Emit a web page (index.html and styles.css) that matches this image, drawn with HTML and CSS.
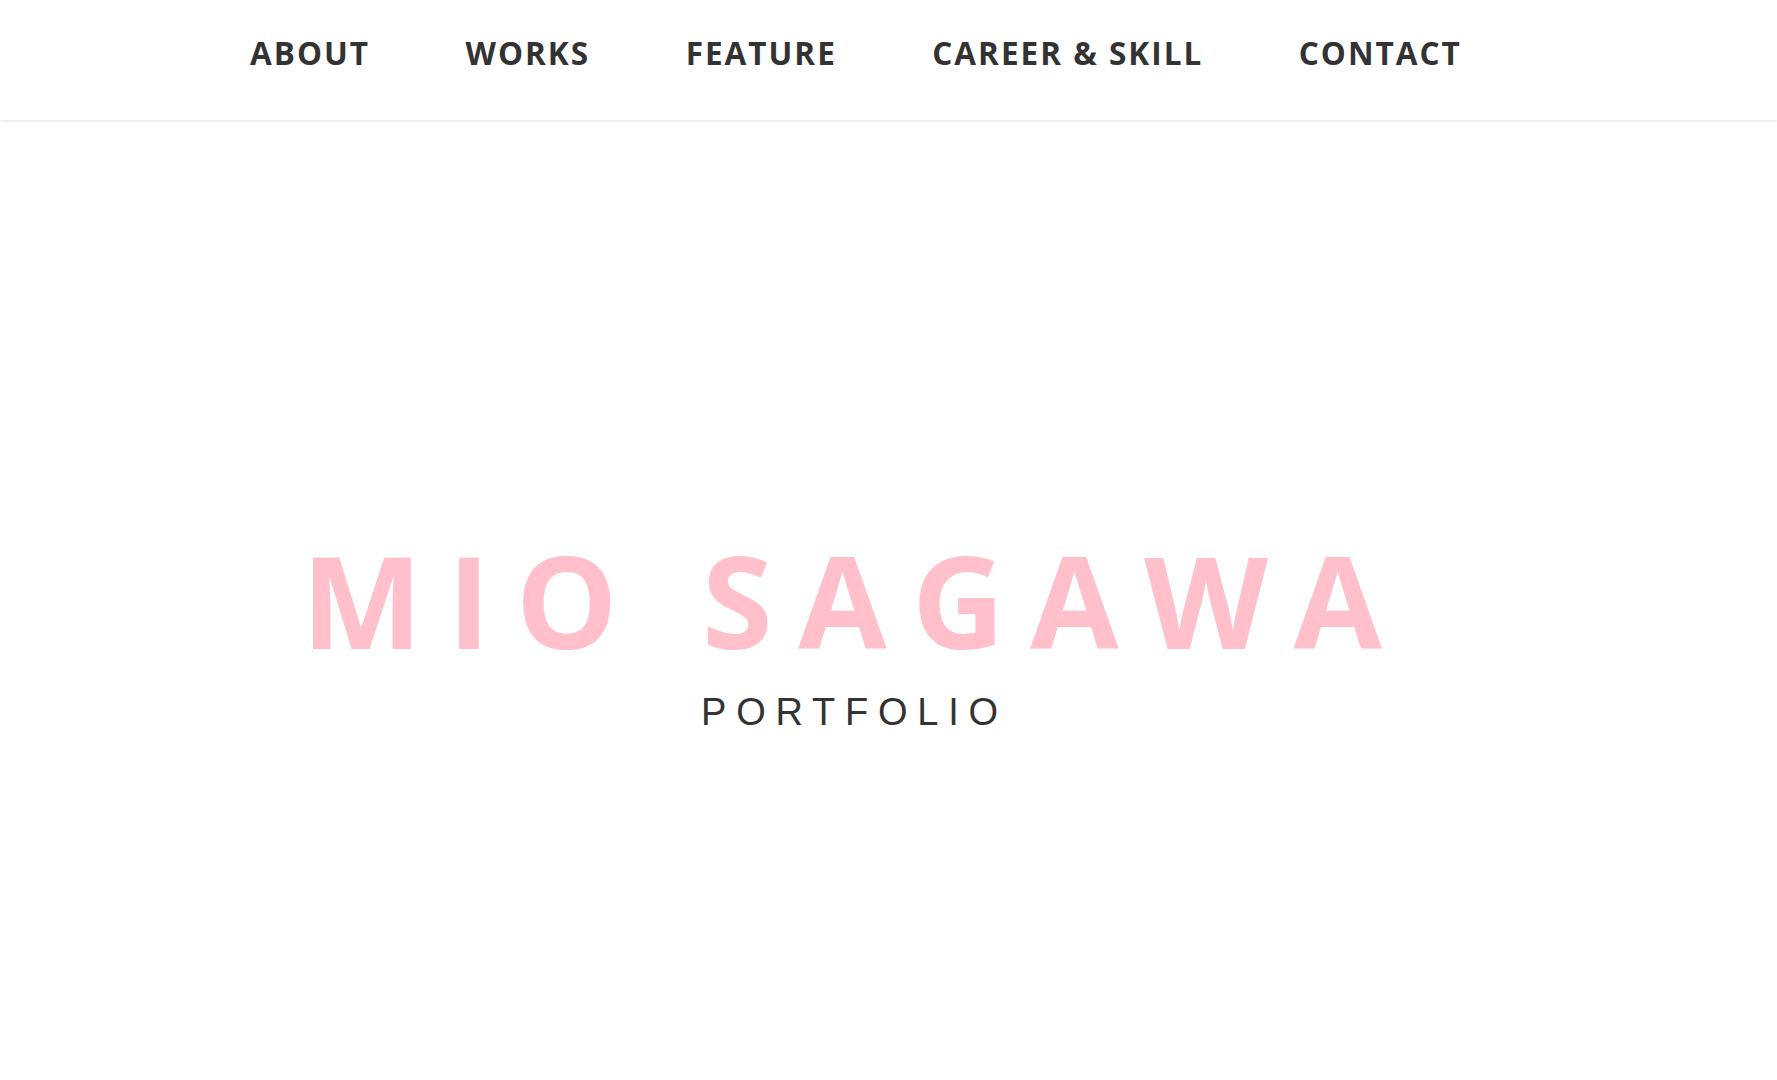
FILE: index.html
```html
<!DOCTYPE html>
<html lang="ja">
<head>
<meta charset="utf-8">
<title>MIO SAGAWA PORTFOLIO</title>
<link rel="stylesheet" href="styles.css">
</head>
<body>
<header class="site-header">
  <nav class="nav">
    <a class="nav-link" href="#about">ABOUT</a>
    <a class="nav-link" href="#works">WORKS</a>
    <a class="nav-link" href="#feature">FEATURE</a>
    <a class="nav-link" href="#career">CAREER &amp; SKILL</a>
    <a class="nav-link" href="#contact">CONTACT</a>
  </nav>
</header>
<main class="hero">
  <h1 class="hero-title">MIO SAGAWA</h1>
  <p class="hero-sub">PORTFOLIO</p>
</main>
</body>
</html>
```
FILE: styles.css
```css
html, body {
  margin: 0;
  padding: 0;
  background: #fff;
}
body {
  font-family: "Open Sans", "Liberation Sans", sans-serif;
  color: #333;
}
.site-header {
  height: 120px;
  background: #fff;
  box-shadow: 0 1px 3px rgba(0,0,0,0.12);
  display: flex;
  align-items: flex-start;
}
.nav {
  display: flex;
  padding-left: 250px;
  padding-top: 30px;
  gap: 95.5px;
}
.nav-link {
  font-family: "Open Sans", sans-serif;
  font-weight: 700;
  font-size: 31.5px;
  line-height: 46px;
  letter-spacing: 2px;
  color: #333;
  text-decoration: none;
}
.hero {
  height: 960px;
  display: flex;
  flex-direction: column;
  align-items: center;
  padding-right: 68px;
}
.hero-title {
  margin: 403px 0 0;
  font-family: "Open Sans", sans-serif;
  font-weight: 700;
  font-size: 128px;
  line-height: 1.2;
  letter-spacing: 0.2em;
  color: #ffc0cb;
}
.hero-sub {
  margin: 14px 0 0;
  font-family: "Liberation Sans", Arial, sans-serif;
  font-size: 38px;
  letter-spacing: 0.257em;
  color: #333;
}
```
